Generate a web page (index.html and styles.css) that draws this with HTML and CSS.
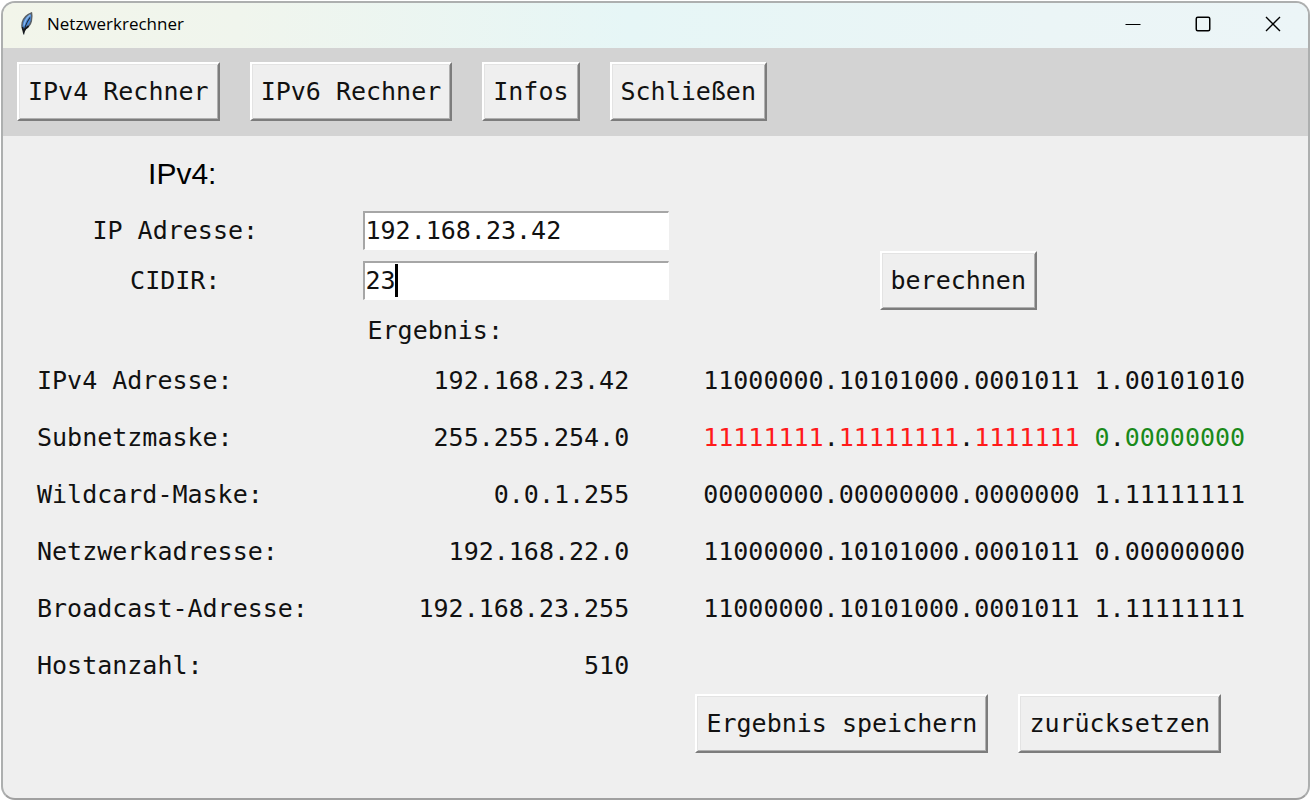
FILE: index.html
```html
<!DOCTYPE html>
<html lang="de">
<head>
<meta charset="utf-8">
<meta name="viewport" content="width=device-width, initial-scale=1">
<title>Netzwerkrechner</title>
<link rel="stylesheet" href="styles.css">
</head>
<body>
<div class="window">
  <header class="titlebar">
    <svg class="feather" width="18" height="26" viewBox="0 0 18 26" aria-hidden="true">
      <path d="M13.500 2C9.500 3.500 5.500 7 4.300 11.500c-.7 2.800-.6 5 .4 7l2-.3C10.500 16 12.500 13.500 13.300 10c.6-3 .9-5.500.2-8z" fill="#4a8ad8" stroke="#5a6066" stroke-width="1.500"/>
      <path d="M12.300 3.800C9 6.500 6.700 10 6 14.500" fill="none" stroke="#8db8e8" stroke-width="1.300"/>
      <path d="M12 6.500C8.800 11 6.300 16 5.700 23.500" fill="none" stroke="#202a38" stroke-width="1.100"/>
      <path d="M4.500 16l1.100 5 2-3.500 3-2.500" fill="none" stroke="#17191c" stroke-width="1.700"/>
    </svg>
    <h1 class="title">Netzwerkrechner</h1>
    <div class="controls">
      <button class="control" type="button" aria-label="Minimieren">
        <svg width="16" height="16" viewBox="0 0 16 16"><path d="M.5 8.500h15" stroke="#000"/></svg>
      </button>
      <button class="control" type="button" aria-label="Maximieren">
        <svg width="16" height="16" viewBox="0 0 16 16"><rect x="1.250" y="1.250" width="13.500" height="13.500" rx="1.500" fill="none" stroke="#000" stroke-width="1.500"/></svg>
      </button>
      <button class="control" type="button" aria-label="Fenster schließen">
        <svg width="16" height="16" viewBox="0 0 16 16"><path d="M1 1l14 14M15 1L1 15" stroke="#000" stroke-width="1.400"/></svg>
      </button>
    </div>
  </header>

  <nav class="toolbar">
    <button class="btn" type="button">IPv4 Rechner</button>
    <button class="btn" type="button">IPv6 Rechner</button>
    <button class="btn" type="button">Infos</button>
    <button class="btn" type="button">Schließen</button>
  </nav>

  <main class="content">
    <form class="form">
      <h2 class="heading">IPv4:</h2>
      <label class="label ip-label" for="ip">IP Adresse:</label>
      <div class="field ip-field"><input class="entry" id="ip" type="text" value="192.168.23.42"></div>
      <label class="label cidr-label" for="cidr">CIDIR:</label>
      <div class="field cidr-field"><input class="entry" id="cidr" type="text" value="23"><span class="caret"></span></div>
      <div class="calculate"><button class="btn" type="button">berechnen</button></div>
      <p class="result-label" id="result">Ergebnis:</p>
    </form>

    <table class="results" aria-labelledby="result">
      <colgroup><col class="col-name"><col class="col-value"><col></colgroup>
      <tbody>
        <tr><th scope="row">IPv4 Adresse:</th><td class="value">192.168.23.42</td><td class="binary">11000000.10101000.0001011 1.00101010</td></tr>
        <tr><th scope="row">Subnetzmaske:</th><td class="value">255.255.254.0</td><td class="binary"><span class="net">11111111</span>.<span class="net">11111111</span>.<span class="net">1111111</span> <span class="host">0</span>.<span class="host">00000000</span></td></tr>
        <tr><th scope="row">Wildcard-Maske:</th><td class="value">0.0.1.255</td><td class="binary">00000000.00000000.0000000 1.11111111</td></tr>
        <tr><th scope="row">Netzwerkadresse:</th><td class="value">192.168.22.0</td><td class="binary">11000000.10101000.0001011 0.00000000</td></tr>
        <tr><th scope="row">Broadcast-Adresse:</th><td class="value">192.168.23.255</td><td class="binary">11000000.10101000.0001011 1.11111111</td></tr>
        <tr><th scope="row">Hostanzahl:</th><td class="value">510</td><td class="binary"></td></tr>
      </tbody>
    </table>

    <div class="actions">
      <button class="btn" type="button">Ergebnis speichern</button>
      <button class="btn" type="button">zurücksetzen</button>
    </div>
  </main>
</div>
</body>
</html>
```

FILE: styles.css
```css
* {
  box-sizing: border-box;
}

body {
  margin: 0;
  padding: 1px 0 0 1px;
  background: #fff;
  color: #111;
  font: 25px/30px "DejaVu Sans Mono", monospace;
}

.window {
  display: flex;
  flex-direction: column;
  min-height: calc(100vh - 1px);
  border: 2px solid #adafaf;
  border-bottom-color: #a0a0a0;
  border-radius: 14px;
  background: #efefef;
  overflow: hidden;
}

.titlebar {
  display: flex;
  align-items: center;
  height: 45px;
  padding: 0 0 3px 15px;
  background: linear-gradient(90deg, #f2f5ea 0%, #f0f5ed 18%, #e6f6f6 48%, #ebf5f6 80%, #ecf5f7 100%);
}

.feather {
  margin-right: 11px;
}

.title {
  margin: 0;
  color: #000;
  font: 400 17px/24px "Open Sans", sans-serif;
}

.controls {
  display: flex;
  align-self: stretch;
  margin-left: auto;
}

.control {
  display: flex;
  align-items: center;
  justify-content: center;
  width: 70px;
  padding: 0;
  border: 0;
  background: transparent;
}

.toolbar {
  display: flex;
  flex-wrap: wrap;
  gap: 30px;
  padding: 14px 14px 15px;
  background: #d3d3d3;
}

.btn {
  height: 59px;
  padding: 0 9px;
  border: solid;
  border-width: 2px;
  border-color: #fff #7c7c7c #7c7c7c #fff;
  background: #efefef;
  box-shadow: inset 1px 1px #e3e3e3, inset -1px -1px #b0b0b0;
  color: #111;
  font: inherit;
  white-space: nowrap;
}

.content {
  flex: 1;
  padding-top: 6px;
}

.form {
  display: grid;
  grid-template-columns: 26.4% 25.8% 42% 1fr;
  grid-template-rows: 63px 50px 50px 47px;
  align-items: center;
}

.heading {
  margin: 0;
  padding-left: 14px;
  color: #000;
  font: 400 30px/36px "Liberation Sans", sans-serif;
  text-align: center;
}

.label {
  grid-column: 1;
  padding-top: 2px;
  text-align: center;
}

.ip-label,
.ip-field {
  grid-row: 2;
}

.cidr-label,
.cidr-field {
  grid-row: 3;
}

.field {
  grid-column: 2;
  position: relative;
  display: flex;
  margin: 0 15px;
}

.entry {
  width: 100%;
  height: 39px;
  padding: 0 1px;
  border: solid;
  border-width: 2px 1px 1px 2px;
  border-color: #a6a6a6 #fff #fff #a6a6a6;
  border-radius: 0;
  outline: 0;
  background: #fff;
  color: #111;
  font: inherit;
}

.caret {
  position: absolute;
  top: 3px;
  left: 32px;
  width: 3px;
  height: 33px;
  background: #000;
}

.calculate {
  display: flex;
  grid-column: 3;
  grid-row: 2 / 5;
  justify-self: center;
  padding-top: 4px;
}

.result-label {
  grid-column: 2;
  grid-row: 4;
  margin: 0;
  padding: 5px 0 0 20px;
}

.results {
  width: 100%;
  table-layout: fixed;
  border-collapse: collapse;
}

.col-name {
  width: 26.4%;
}

.col-value {
  width: 25.8%;
}

.results th,
.results td {
  height: 57px;
  padding: 0;
  font-weight: 400;
  white-space: nowrap;
}

.results th {
  padding-left: 34px;
  text-align: left;
}

.results .value {
  padding-right: 55px;
  text-align: right;
}

.results .binary {
  padding-left: 19px;
}

.net {
  color: #ff1a1a;
}

.host {
  color: #1a8a1a;
}

.actions {
  display: flex;
  flex-wrap: wrap;
  justify-content: center;
  gap: 30px;
  width: 42%;
  margin-left: 52.2%;
}
```
